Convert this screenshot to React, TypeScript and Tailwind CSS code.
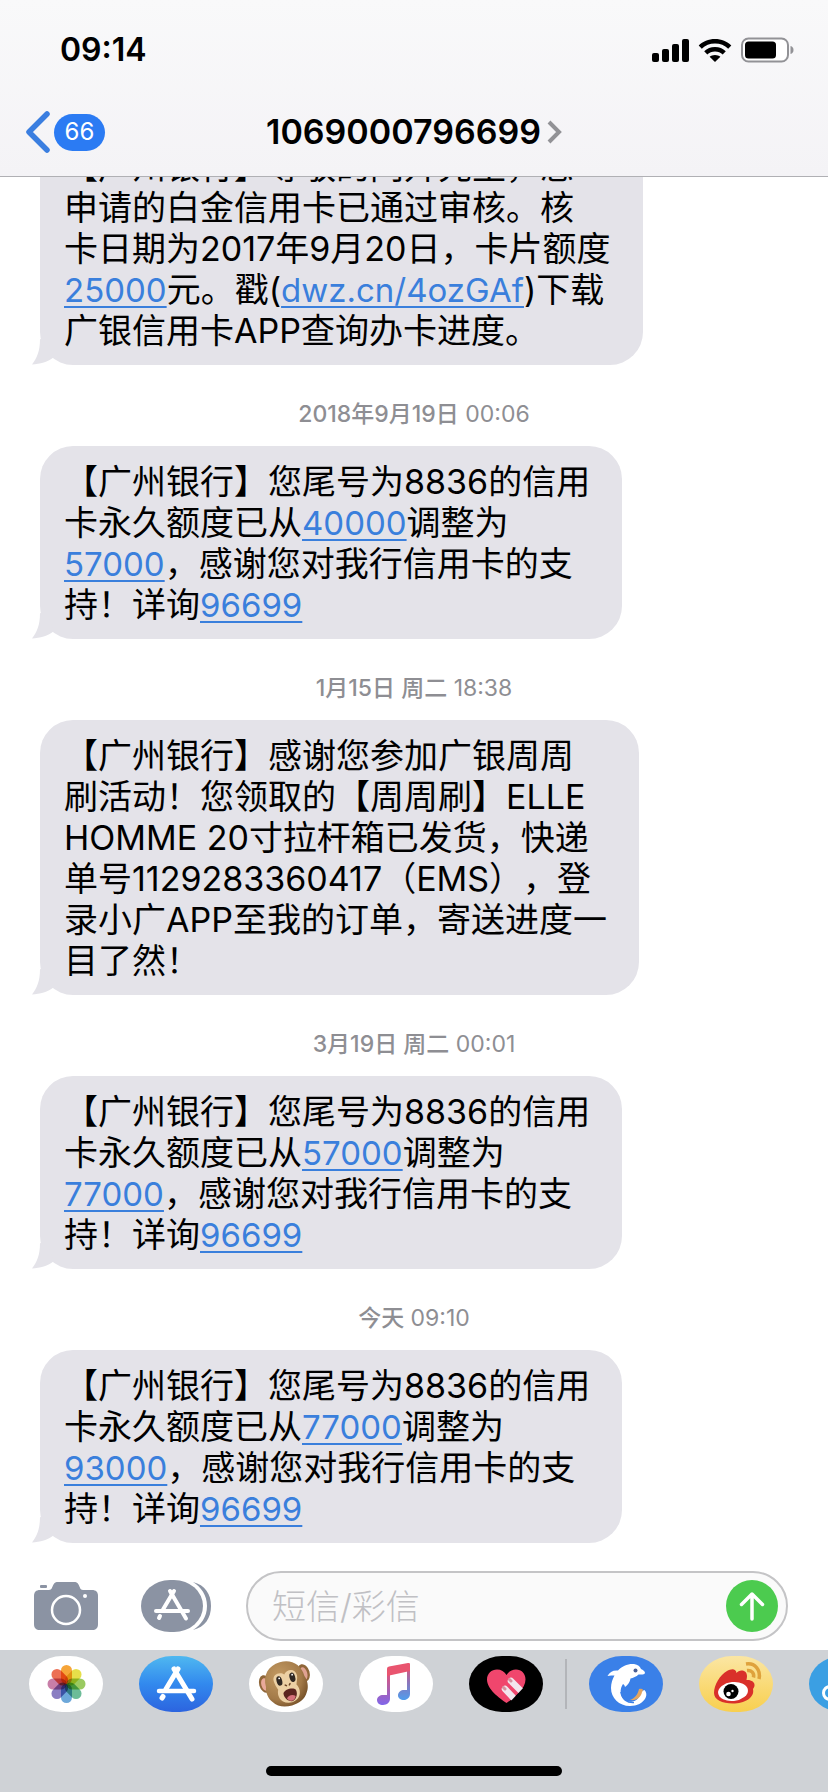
import { Fragment } from 'react';

type Part = string | { link: string };

type Message = {
  id: number;
  date?: string;
  time?: string;
  lines: Part[][];
};

const limitMessage = (from: string, to: string): Part[][] => [
  ['【广州银行】您尾号为8836的信用'],
  ['卡永久额度已从', { link: from }, '调整为'],
  [{ link: to }, '，感谢您对我行信用卡的支'],
  ['持！详询', { link: '96699' }],
];

const messages: Message[] = [
  {
    id: 1,
    lines: [
      ['【广州银行】尊敬的闫升先生，您'],
      ['申请的白金信用卡已通过审核。核'],
      ['卡日期为2017年9月20日，卡片额度'],
      [{ link: '25000' }, '元。戳(', { link: 'dwz.cn/4ozGAf' }, ')下载'],
      ['广银信用卡APP查询办卡进度。'],
    ],
  },
  { id: 2, date: '2018年9月19日', time: '00:06', lines: limitMessage('40000', '57000') },
  {
    id: 3,
    date: '1月15日 周二',
    time: '18:38',
    lines: [
      ['【广州银行】感谢您参加广银周周'],
      ['刷活动！您领取的【周周刷】ELLE'],
      ['HOMME 20寸拉杆箱已发货，快递'],
      ['单号1129283360417（EMS），登'],
      ['录小广APP至我的订单，寄送进度一'],
      ['目了然！'],
    ],
  },
  { id: 4, date: '3月19日 周二', time: '00:01', lines: limitMessage('57000', '77000') },
  { id: 5, date: '今天', time: '09:10', lines: limitMessage('77000', '93000') },
];

const StatusBar = () => (
  <div className="flex h-[88px] items-center justify-between pt-3 pl-[60px] pr-[34px]">
    <time className="text-[32px] leading-10 font-semibold">09:14</time>
    <div className="flex items-center gap-2">
      <svg className="h-6 w-[38px]" viewBox="0 0 38 24">
        <rect x="0" y="15" width="7" height="9" rx="2" />
        <rect x="10" y="11" width="7" height="13" rx="2" />
        <rect x="20" y="6" width="7" height="18" rx="2" />
        <rect x="30" y="1" width="7" height="23" rx="2" />
      </svg>
      <svg className="h-6 w-[34px]" viewBox="0 0 34 24">
        <path d="M17 1C10.500 1 4.800 3.500 0.700 7.500L3.800 10.700C7.200 7.300 11.800 5.400 17 5.400S26.800 7.300 30.200 10.700L33.300 7.500C29.200 3.500 23.500 1 17 1Z" />
        <path d="M17 9C12.800 9 9 10.600 6.200 13.200L9.300 16.400C11.300 14.500 14 13.400 17 13.400S22.700 14.500 24.700 16.400L27.800 13.200C25 10.600 21.200 9 17 9Z" />
        <path d="M17 17C14.900 17 13 17.700 11.600 18.800L17 24L22.400 18.800C21 17.700 19.100 17 17 17Z" />
      </svg>
      <svg className="h-[26px] w-[54px]" viewBox="0 0 54 26">
        <rect x="2" y="1.500" width="46" height="23" rx="6.500" fill="#fff" stroke="#929296" strokeWidth="2" />
        <rect x="5" y="4.500" width="31" height="17" rx="3.500" />
        <path d="M50.500 9C52.500 9.500 53.500 11 53.500 13S52.500 16.500 50.500 17Z" fill="#929296" />
      </svg>
    </div>
  </div>
);

const NavBar = () => (
  <div className="grid h-[88px] grid-cols-[1fr_auto_1fr] items-center">
    <button type="button" aria-label="返回" className="flex items-center gap-1 pl-[26px]">
      <svg className="h-[42px] w-6" viewBox="0 0 24 42" fill="none" stroke="#3a7ee0" strokeWidth="5.500" strokeLinecap="round" strokeLinejoin="round">
        <path d="M21 3L3 21L21 39" />
      </svg>
      <span className="flex h-[37px] w-[51px] items-center justify-center rounded-full bg-[#2b7bf3] text-2xl text-white">66</span>
    </button>
    <button type="button" className="flex items-center gap-1.5">
      <h1 className="text-[34px] leading-10 font-semibold">1069000796699</h1>
      <svg className="h-6 w-[15px]" viewBox="0 0 15 24" fill="none" stroke="#929296" strokeWidth="4">
        <path d="M2 2L12 12L2 22" />
      </svg>
    </button>
  </div>
);

const Bubble = ({ lines }: { lines: Part[][] }) => (
  <div className="relative w-fit rounded-[33px] bg-[#e4e3e9] pt-[15px] pr-8 pb-[14px] pl-6">
    <p className="text-[34px] leading-[41px] whitespace-nowrap [text-spacing-trim:space-all]">
      {lines.map((parts, i) => (
        <Fragment key={i}>
          {i > 0 && <br />}
          {parts.map((part, j) =>
            typeof part === 'string' ? (
              part
            ) : (
              <a key={j} href="#" className="text-[33px] leading-none text-[#3a7fdc] underline decoration-2 underline-offset-4">
                {part.link}
              </a>
            ),
          )}
        </Fragment>
      ))}
    </p>
    {/* bubble tail */}
    <svg className="absolute bottom-0 -left-2 h-7 w-6" viewBox="0 0 24 28" fill="#e4e3e9">
      <path d="M8 2C8 14 5 21 0 27.500C8 27 16 25 22 20L16 4Z" />
    </svg>
  </div>
);

const AppGlyph = () => (
  <g fill="none" stroke="#fff" strokeLinecap="round">
    <path d="M35 13L53 43" strokeWidth="5" />
    <path d="M39 13L27 33" strokeWidth="5" />
    <path d="M24 40.500L23 42" strokeWidth="5" />
    <path d="M20 35H55" strokeWidth="4.500" />
  </g>
);

const petals = ['#f59b23', '#e3dc36', '#8fc450', '#5db58d', '#5d9fd6', '#7d70bb', '#c2709f', '#ea5f42'];

const PhotosIcon = () => (
  <>
    <rect width="74" height="56" rx="33" ry="28" fill="#fff" />
    {petals.map((color, i) => (
      <rect
        key={color}
        x="32"
        y="9"
        width="11"
        height="19"
        rx="5.500"
        fill={color}
        fillOpacity="0.9"
        className="mix-blend-multiply"
        transform={`rotate(${i * 45} 37.500 28)`}
      />
    ))}
  </>
);

const AppStoreIcon = () => (
  <>
    <defs>
      <linearGradient id="store" x1="0" y1="0" x2="0" y2="1">
        <stop offset="0" stopColor="#4fb8f0" />
        <stop offset="0.500" stopColor="#3289ee" />
        <stop offset="1" stopColor="#2c64df" />
      </linearGradient>
    </defs>
    <rect width="74" height="56" rx="33" ry="28" fill="url(#store)" />
    <AppGlyph />
  </>
);

const MonkeyIcon = () => (
  <>
    <defs>
      <radialGradient id="fur" cx="0.400" cy="0.300" r="0.750">
        <stop offset="0" stopColor="#c39a63" />
        <stop offset="0.700" stopColor="#a37a48" />
        <stop offset="1" stopColor="#755028" />
      </radialGradient>
    </defs>
    <rect width="74" height="56" rx="33" ry="28" fill="#fff" />
    <g transform="rotate(-16 38 28)">
      <ellipse cx="17" cy="22" rx="6" ry="9" fill="#8f6639" />
      <ellipse cx="17" cy="22.500" rx="4" ry="6.500" fill="#e9a99a" />
      <ellipse cx="57" cy="22" rx="6" ry="9" fill="#8f6639" />
      <ellipse cx="57" cy="22.500" rx="3.500" ry="6.500" fill="#e0a292" />
      <path d="M37 5C49 5 57 13 57 25C59 30 58 37 55 41C51 48 44 50 37 50S23 48 19 41C16 37 15 30 17 25C17 13 25 5 37 5Z" fill="url(#fur)" />
      <path d="M38 18C41 14 50 14 50 22C50 25 48 28 47 31C50 36 49 46 38 47C26 46 25 36 28 31C27 28 26 25 26 22C26 14 35 14 38 18Z" fill="#ecd0a4" />
      <ellipse cx="31.500" cy="23" rx="2.800" ry="4.800" fill="#2f2722" />
      <ellipse cx="45" cy="23" rx="2.800" ry="4.800" fill="#2f2722" />
      <circle cx="32" cy="20.500" r="0.900" fill="#fff" />
      <circle cx="45.500" cy="20.500" r="0.900" fill="#fff" />
      <path d="M36 28.500L37 29.500M41 28.500L40 29.500" stroke="#6b4526" strokeWidth="1.500" strokeLinecap="round" />
      <path d="M32 36C34 32.500 43 32.500 45 36C46 41 42 46 38.500 46S31 41 32 36Z" fill="#5c2520" />
      <path d="M34 42C36 39 41 39 43 42C42 44.500 40 45.500 38.500 45.500S35 44.500 34 42Z" fill="#d5717a" />
    </g>
  </>
);

const MusicIcon = () => (
  <>
    <defs>
      <linearGradient id="noteLeft" x1="0" y1="0" x2="0" y2="1">
        <stop offset="0" stopColor="#ee4f6d" />
        <stop offset="0.500" stopColor="#b15fa8" />
        <stop offset="1" stopColor="#8066ea" />
      </linearGradient>
      <linearGradient id="noteRight" x1="0" y1="0" x2="0" y2="1">
        <stop offset="0" stopColor="#ee4f6d" />
        <stop offset="0.500" stopColor="#8d74b9" />
        <stop offset="1" stopColor="#4f9ded" />
      </linearGradient>
    </defs>
    <rect width="74" height="56" rx="33" ry="28" fill="#fff" />
    <path d="M28 13H31V43C31 46 28 49 24 49C20.500 49 18 47 18 44C18 41 21 39 24 39H28Z" fill="url(#noteLeft)" />
    <path d="M48 8H51V38C51 41.500 48 44 45 44C41.500 44 39 42 39 39.500C39 36 42 34 45 34H48Z" fill="url(#noteRight)" />
    <path d="M28 12.500Q28 11 30 10.600L49 7Q51 6.700 51 8V15L28 20Z" fill="#e9546f" />
  </>
);

const HeartIcon = () => (
  <>
    <rect width="74" height="56" rx="33" ry="28" fill="#000" />
    <path d="M37.500 47C30 42 18 33 18 23.500C18 17.500 22.500 13.500 28 13.500C32 13.500 35.500 15.500 37.500 19C39.500 15.500 43 13.500 47 13.500C52.500 13.500 56.500 17.500 56.500 23.500C56.500 33 45 42 37.500 47Z" fill="#f0466d" />
    <g stroke="#f3e6ee" strokeWidth="6.500">
      <path d="M42 25L52 35" strokeLinecap="round" />
      <path d="M36 33L44 41.500" strokeLinecap="round" />
    </g>
    <path d="M40.500 23.500L42 25M34.500 31.500L36 33" stroke="#d5929f" strokeWidth="3" strokeLinecap="round" />
    <path d="M57 29L39 48L50 50L62 36Z" fill="#000" />
  </>
);

const DolphinIcon = () => (
  <>
    <rect width="74" height="56" rx="33" ry="28" fill="#3a80e8" />
    <path d="M22 32C22 27 23.500 23 25.500 19.500C23.500 19.500 21 19.500 18.500 20C20.500 16 24 14 29 14.500C33 10 39 7.500 45 8C49 8.500 51 10.500 52 13C54 14 56 15 56 17C55.500 19 52 18.500 49.500 18.500C47.500 20.500 44 22 41.500 22.500C41 26 39 29 36 31C35.500 29 35 28.500 34 28C30.500 33 31 40 35 43.500C40 47.500 48 46 50.500 40C51.500 37 53 34.500 55.500 34C57.500 36 58 39 56.500 42C54 47 48 50 41 50C30 50 22 42 22 32Z" fill="#fff" />
    <path d="M50 33C54 32 55 34 53 36C52 41 48 45 41 44C46 42 49 38 50 33Z" fill="#e2a561" />
    <path d="M32 36C33 43 38 47 45 46.500" fill="none" stroke="#3a80e8" strokeWidth="1.500" />
    <circle cx="46.500" cy="14.500" r="2" fill="#4a5f94" />
  </>
);

const WeiboIcon = () => (
  <>
    <defs>
      <linearGradient id="weibo" x1="0" y1="0" x2="0" y2="1">
        <stop offset="0" stopColor="#fbe6a3" />
        <stop offset="1" stopColor="#f8cf4e" />
      </linearGradient>
    </defs>
    <rect width="74" height="56" rx="33" ry="28" fill="url(#weibo)" />
    <g fill="none" stroke="#dfa23c" strokeWidth="3.500">
      <path d="M47 8C56 6.500 62 14 60 23" />
      <path d="M48 14.500C52.500 14 55.500 17 54.500 21.500" />
    </g>
    <path d="M15 37C15 29 21 19 28 15C32 12.500 37 12 37.500 17C40 13 48 13.500 48 20C48 22 47.500 23 47.500 24C52 23.500 56 26 55.500 29.500C55.500 31 54.500 32 54 33C56 42 45 47.500 34 47.500C23 47.500 15 43.500 15 37Z" fill="#d9302a" />
    <ellipse cx="34" cy="35.500" rx="15" ry="9.500" fill="#fff" transform="rotate(-6 34 35.500)" />
    <circle cx="32" cy="35.500" r="7.500" fill="#000" />
    <circle cx="29.500" cy="38" r="2.300" fill="#fff" />
    <circle cx="33.500" cy="35" r="1.200" fill="#fff" />
  </>
);

const CloudIcon = () => (
  <>
    <rect width="74" height="56" rx="33" ry="28" fill="#3b9fe3" />
    <circle cx="21" cy="37" r="6.500" fill="none" stroke="#fff" strokeWidth="3" />
  </>
);

const drawerApps = [
  { name: '照片', Icon: PhotosIcon },
  { name: 'App Store', Icon: AppStoreIcon },
  { name: '拟我表情', Icon: MonkeyIcon },
  { name: '音乐', Icon: MusicIcon },
  { name: 'Digital Touch', Icon: HeartIcon },
  { name: '携程', Icon: DolphinIcon },
  { name: '微博', Icon: WeiboIcon },
  { name: '云盘', Icon: CloudIcon },
];

const InputBar = () => (
  <form className="flex shrink-0 items-center bg-white py-[9px] pr-10 pl-[34px]" onSubmit={(e) => e.preventDefault()}>
    <button type="button" aria-label="相机" className="shrink-0">
      <svg className="h-12 w-16" viewBox="0 0 64 48" fill="#8b93a3">
        <path d="M6 8H15C18 8 18 5 19.500 2.500C20.500 0.500 22 0 24 0H40C42 0 43.500 0.500 44.500 2.500C46 5 46 8 49 8H58C62 8 64 10 64 14V42C64 46 62 48 58 48H6C2 48 0 46 0 42V14C0 10 2 8 6 8Z" />
        <rect x="6" y="3" width="7" height="3" rx="1" />
        <circle cx="32" cy="28" r="14" fill="none" stroke="#fff" strokeWidth="2.500" />
        <circle cx="51" cy="14" r="2" fill="#fff" />
      </svg>
    </button>
    <button type="button" aria-label="App 抽屉" className="ml-[43px] shrink-0">
      <svg className="h-[52px] w-[70px]" viewBox="0 0 70 52">
        <path d="M52 2C64 5 70 14 70 26S64 47 52 50C60 45 66 37 66 26S60 7 52 2Z" fill="#8b93a3" />
        <rect width="62" height="52" rx="29" ry="26" fill="#8b93a3" />
        <g fill="none" stroke="#fff" strokeWidth="4" strokeLinecap="round">
          <path d="M29 11L45 38.500" />
          <path d="M33 11L22 29.500M19 36L18 38" />
          <path d="M15 31H47" />
        </g>
      </svg>
    </button>
    <div className="ml-[35px] flex h-[70px] min-w-0 flex-1 items-center rounded-full border-2 border-[#c4c4c6] bg-[#fafafa] pr-2 pl-6">
      <input
        type="text"
        aria-label="短信/彩信"
        placeholder="短信/彩信"
        className="min-w-0 flex-1 bg-transparent text-[34px] font-light outline-none placeholder:text-[#c0c0c4]"
      />
      <button type="submit" aria-label="发送" className="flex size-[52px] shrink-0 items-center justify-center rounded-full bg-[#4ccb4f]">
        <svg className="h-[30px] w-[26px]" viewBox="0 0 26 30" fill="none" stroke="#fff" strokeWidth="3.500" strokeLinecap="round" strokeLinejoin="round">
          <path d="M13 28V3M2.500 13.500L13 3L23.500 13.500" />
        </svg>
      </button>
    </div>
  </form>
);

const App = () => {
  return (
    <div className="flex h-screen flex-col overflow-hidden bg-white font-['Inter','Noto_Sans_CJK_SC',sans-serif] text-black">
      <header className="shrink-0 border-b border-[#b0b0b4] bg-linear-to-b from-[#f9f9fa] to-[#f4f3f6]">
        <StatusBar />
        <NavBar />
      </header>

      <main className="flex min-h-0 flex-1 flex-col justify-end overflow-hidden px-10 pb-[19px]">
        {messages.map((message) => (
          <Fragment key={message.id}>
            {message.time && (
              <div className="pt-[37px] pb-[19px] text-center text-[23px] leading-[25px] text-[#8e8e93]">
                <span className="font-medium">{message.date}</span> {message.time}
              </div>
            )}
            <Bubble lines={message.lines} />
          </Fragment>
        ))}
      </main>

      <InputBar />

      <footer className="flex h-[142px] shrink-0 flex-col justify-between overflow-hidden bg-[#cfd2d6] pt-1.5 pb-4">
        <nav className="flex gap-9 pl-[29px]">
          {drawerApps.map(({ name, Icon }, i) => (
            <Fragment key={name}>
              {i === 5 && <div className="-mx-[14px] h-[50px] w-0.5 shrink-0 self-center bg-[#b3b5b9]" />}
              <button type="button" aria-label={name} className="shrink-0">
                <svg className="isolate h-14 w-[74px]" viewBox="0 0 74 56">
                  <Icon />
                </svg>
              </button>
            </Fragment>
          ))}
        </nav>
        <div className="mx-auto h-2.5 w-[296px] rounded-full bg-black" />
      </footer>
    </div>
  );
};

export default App;
